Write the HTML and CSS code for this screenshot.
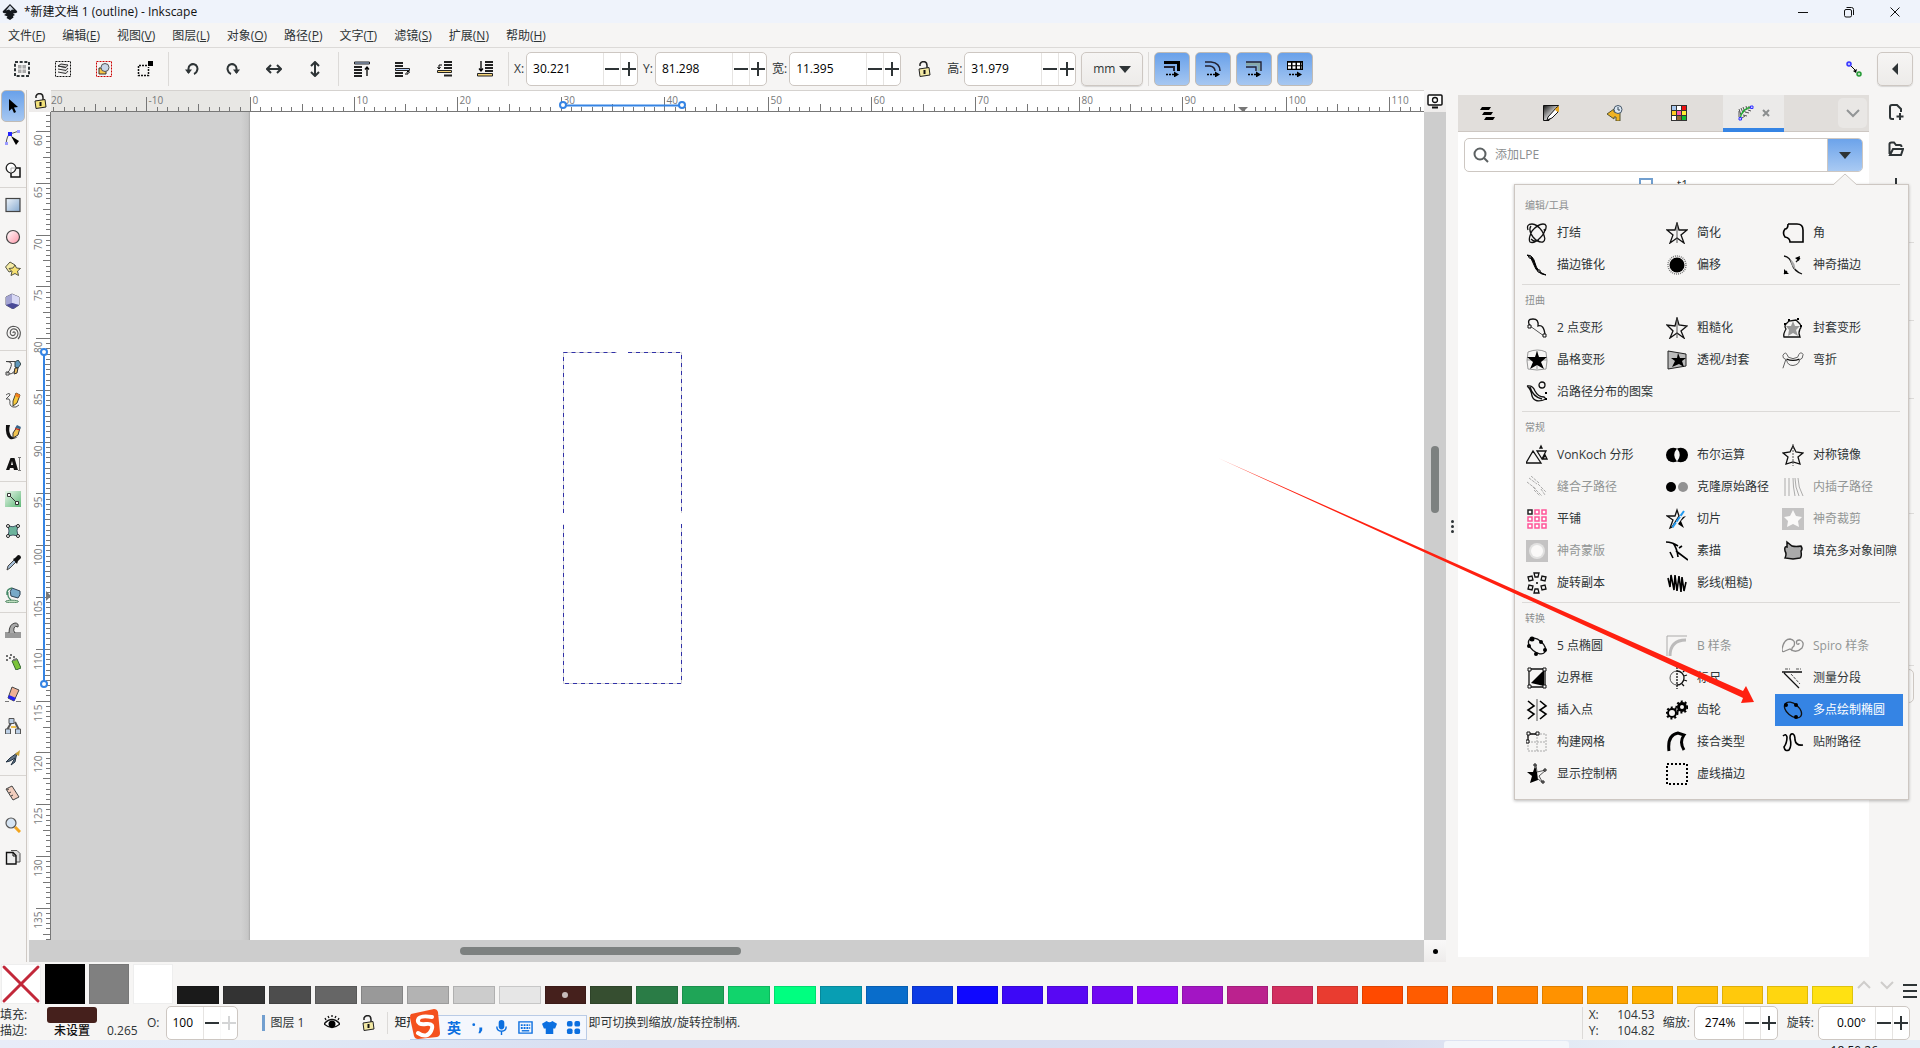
FILE: index.html
```html
<!DOCTYPE html>
<html lang="zh-CN">
<head>
<meta charset="utf-8">
<title>*新建文档 1 (outline) - Inkscape</title>
<link rel="stylesheet" href="styles.css">
</head>
<body>
<header class="titlebar">
  <svg class="i16" viewBox="0 0 16 16"><path d="M8 0 15 7q1 1.500-1 2l-3 .5 2 1.500-2 1 .5 1.500L8 16l-3.500-2 1-1.500L2 11l2.500-1.500L1.500 9Q0 8 1 7Z" fill="#15181d"/><path d="M8 1.500 12 6l-2-.5L8.500 7 7 5.500 4 6.500Z" fill="#cfd8e4"/></svg>
  <h1>*新建文档 1 (outline) - Inkscape</h1>
  <div class="winbtns">
    <button aria-label="最小化"><svg viewBox="0 0 12 12"><path d="M1 6.500h10"/></svg></button>
    <button aria-label="还原"><svg viewBox="0 0 12 12"><rect x="1.500" y="3.500" width="7" height="7.500" rx="1.500"/><path d="M3.500 1.500h5q2 0 2 2V9"/></svg></button>
    <button aria-label="关闭"><svg viewBox="0 0 12 12"><path d="m1.500 1.500 9 9m0-9-9 9"/></svg></button>
  </div>
</header>

<nav class="menubar">
  <button>文件(<u>F</u>)</button><button>编辑(<u>E</u>)</button><button>视图(<u>V</u>)</button><button>图层(<u>L</u>)</button><button>对象(<u>O</u>)</button><button>路径(<u>P</u>)</button><button>文字(<u>T</u>)</button><button>滤镜(<u>S</u>)</button><button>扩展(<u>N</u>)</button><button>帮助(<u>H</u>)</button>
</nav>

<div class="toolbar">
  <button class="tb" aria-label="全选"><svg class="i16" viewBox="0 0 16 16"><rect x="1" y="1" width="14" height="14" fill="none" stroke="#2e3436" stroke-width="2" stroke-dasharray="3 1.667"/><path d="M4 4h3.500v3.500H4zM8.500 4H12v3.500H8.500zM4 8.500h3.500V12H4zM8.500 8.500H12V12H8.500z" fill="#aaa"/></svg></button>
  <button class="tb" aria-label="选择所有图层"><svg class="i16" viewBox="0 0 16 16"><rect x=".5" y=".5" width="15" height="15" fill="none" stroke="#111" stroke-dasharray="2 1"/><path d="m3 5 3-2 7 1-2 2.500zM3 8l8 1.500L13 7M3 11l8 1.500 2-2.500M3 5l8 1.500" fill="#ddd" stroke="#333"/></svg></button>
  <button class="tb" aria-label="取消选择"><svg class="i16" viewBox="0 0 16 16"><rect x=".5" y=".5" width="15" height="15" fill="none" stroke="#c00" stroke-dasharray="2 1"/><path d="M3 7h7v6H3z" fill="#f6c545" stroke="#333"/><circle cx="9" cy="6.500" r="4" fill="#c8d6e8" stroke="#555"/></svg></button>
  <button class="tb" aria-label="切换选择框"><svg class="i16" viewBox="0 0 16 16"><path d="M10 4.500H1.500v10h10V6" fill="none" stroke="#111" stroke-width="1.500" stroke-dasharray="2 1"/><path d="M11 0h5v5h-5z"/></svg></button>
  <span class="sep"></span>
  <button class="tb" aria-label="逆时针旋转"><svg class="i16 ln" viewBox="0 0 16 16"><path d="M4.500 12V7.500a4.500 4.500 0 1 1 8.500 2.200Q12.500 12 10 13"/><path d="M1 8.500h7L4.500 13z" class="f"/></svg></button>
  <button class="tb" aria-label="顺时针旋转"><svg class="i16 ln" viewBox="0 0 16 16"><path d="M11.500 12V7.500A4.500 4.500 0 1 0 3 9.700Q3.500 12 6 13"/><path d="M15 8.500H8l3.500 4.500z" class="f"/></svg></button>
  <button class="tb" aria-label="水平翻转"><svg class="i16 ln" viewBox="0 0 16 16"><path d="M1 8h14M5 4 1 8l4 4m6-8 4 4-4 4"/></svg></button>
  <button class="tb" aria-label="垂直翻转"><svg class="i16 ln" viewBox="0 0 16 16"><path d="M8 1v14M4 5l4-4 4 4m-8 6 4 4 4-4"/></svg></button>
  <span class="sep"></span>
  <button class="tb" aria-label="置于顶层"><svg class="i16" viewBox="0 0 16 16"><path d="M.5 1h15v2H.5z" fill="#b7cff5" stroke="#222"/><path d="M0 6h8M0 9h8M0 12h8M0 15h8" stroke="#222" stroke-width="2"/><path d="M13 15V6m-2 2.500L13 6l2 2.500" fill="none" stroke="#000" stroke-width="1.300"/></svg></button>
  <button class="tb" aria-label="上移一层"><svg class="i16" viewBox="0 0 16 16"><path d="M0 2h8M0 5h8M0 12h8M0 15h8" stroke="#222" stroke-width="2"/><path d="M.5 7.500h14v2H.5z" fill="#b7cff5" stroke="#222"/><path d="M10 13h3v-3m-1.500 1.500L13 10l2 1.500" fill="none" stroke="#000"/></svg></button>
  <button class="tb" aria-label="下移一层"><svg class="i16" viewBox="0 0 16 16"><path d="M8 1h8M8 4h8M8 7h8M8 14.500h8" stroke="#222" stroke-width="2"/><path d="M1.500 9.500h14v2h-14z" fill="#f5d479" stroke="#222"/><path d="M6 4H3v4M1.500 6 3 8l1.500-2" fill="none" stroke="#000"/></svg></button>
  <button class="tb" aria-label="置于底层"><svg class="i16" viewBox="0 0 16 16"><path d="M8 1h8M8 4h8M8 7h8M8 10h8" stroke="#222" stroke-width="2"/><path d="M.5 12.500h15v2.500H.5z" fill="#f5d479" stroke="#222"/><path d="M4 0v10M2 7.500 4 10l2-2.500" fill="none" stroke="#000" stroke-width="1.300"/></svg></button>
  <span class="sep"></span>
  <label for="fx">X:</label><span class="spin"><input id="fx" value="30.221"><button class="minus" aria-label="减"></button><button class="plus" aria-label="加"></button></span>
  <label for="fy">Y:</label><span class="spin"><input id="fy" value="81.298"><button class="minus" aria-label="减"></button><button class="plus" aria-label="加"></button></span>
  <label for="fw">宽:</label><span class="spin"><input id="fw" value="11.395"><button class="minus" aria-label="减"></button><button class="plus" aria-label="加"></button></span>
  <button class="tb" aria-label="锁定宽高比"><svg class="i16" viewBox="0 0 16 16"><path d="M4 5V3Q5 .5 8 .5q3 .5 3 4v2.500" fill="none" stroke="#222" stroke-width="1.500"/><path d="m3 8 10-1.500 1 7.500L4 15.500z" fill="#f3e9a4" stroke="#222"/><path d="M8.500 9v4" stroke="#111" stroke-width="2"/></svg></button>
  <label for="fh">高:</label><span class="spin"><input id="fh" value="31.979"><button class="minus" aria-label="减"></button><button class="plus" aria-label="加"></button></span>
  <button class="unit">mm <i class="tri"></i></button>
  <span class="sep"></span>
  <button class="tb on" aria-label="缩放描边宽度"><svg class="i16" viewBox="0 0 16 16"><path d="M0 1.500h14.500V10" fill="none" stroke="#000" stroke-width="3"/><path d="M0 6h10v4" fill="none" stroke="#223" stroke-width="2"/><path d="M2 13.500h8" stroke="#000" stroke-width="1.500" stroke-dasharray="2 1"/><path d="m10 10.500 5 3-5 3z"/></svg></button>
  <button class="tb on" aria-label="缩放圆角"><svg class="i16" viewBox="0 0 16 16"><path d="M0 1h6q9 1 9 9M0 5h5q5 1 5 5" fill="none" stroke="#223" stroke-width="1.600"/><path d="M2 13.500h8" stroke="#000" stroke-width="1.500" stroke-dasharray="2 1"/><path d="m10 10.500 5 3-5 3z"/></svg></button>
  <button class="tb on" aria-label="变换渐变"><svg class="i16" viewBox="0 0 16 16"><path d="M0 3h13v7" fill="none" stroke="#8aa" stroke-width="3"/><path d="M0 1h15v9M0 6h10v4" fill="none" stroke="#223" stroke-width="1.400"/><path d="M2 13.500h8" stroke="#000" stroke-width="1.500" stroke-dasharray="2 1"/><path d="m10 10.500 5 3-5 3z"/></svg></button>
  <button class="tb on" aria-label="变换图案"><svg class="i16" viewBox="0 0 16 16"><path d="M0 0h16v9H0z"/><path d="M1 3h14M1 6.500h14" stroke="#fff" stroke-width="2.500" stroke-dasharray="3 1.500"/><path d="M2 13.500h8" stroke="#000" stroke-width="1.500" stroke-dasharray="2 1"/><path d="m10 10.500 5 3-5 3z"/></svg></button>
  <span class="grow"></span>
  <button class="tb" aria-label="贴齐"><svg class="i16" viewBox="0 0 16 16"><circle cx="3" cy="3" r="2" fill="#bbf" stroke="#33f" stroke-width="1.500"/><circle cx="13" cy="13" r="2" fill="#bdb" stroke="#293" stroke-width="1.500"/><path d="m5 5 4 4" stroke="#000"/><path d="m11 8-1 4-3-2z"/></svg></button>
  <button class="tb box" aria-label="折叠"><i class="ltri"></i></button>
</div>

<main class="work">
  <aside class="toolbox">
    <button class="on" aria-label="选择"><svg class="i16" viewBox="0 0 16 16"><path d="m4 1 9 8-4 .5 2 4.500-2 1-2-4.500L4 13z" fill="#000"/></svg></button>
    <button aria-label="节点"><svg class="i16" viewBox="0 0 16 16"><path d="M1 14Q2 5 5 4l9-3" fill="none" stroke="#555"/><path d="M3 2h4v4H3z" fill="#22f"/><path d="M0 12h3v3H0zM12 0h3v3h-3z" fill="#99f"/><path d="m6 6 8 5-3 4z"/></svg></button>
    <button aria-label="形状生成"><svg class="i16" viewBox="0 0 16 16"><circle cx="6" cy="6" r="4.800" fill="#fff" stroke="#222" stroke-width="1.300"/><path d="M11 6h4v9H6v-4" fill="none" stroke="#111" stroke-width="1.500"/><path d="M6 11V6h5" fill="none" stroke="#aaa"/></svg></button>
    <hr>
    <button aria-label="矩形"><svg class="i16" viewBox="0 0 16 16"><rect x="1" y="1.500" width="14" height="13" fill="url(#gb)" stroke="#444" stroke-width="1.200"/></svg></button>
    <button aria-label="圆形"><svg class="i16" viewBox="0 0 16 16"><circle cx="8" cy="8" r="6.500" fill="url(#gp)" stroke="#444" stroke-width="1.200"/></svg></button>
    <button aria-label="星形"><svg class="i16" viewBox="0 0 16 16"><path d="m5 1 5 3-.5 5L4 11 .5 6z" fill="#f5eba5" stroke="#554"/><path d="m10 4 1.500 3 4 .5-3 2.500 1 4.500-3.500-2-4 2 1-4L4 7.500l4-.5z" fill="#f8e272" stroke="#554"/></svg></button>
    <button aria-label="3D盒子"><svg class="i16" viewBox="0 0 16 16"><path d="m7 1 7 3v8l-6 4-7-4V4z" fill="#9a9bd0" stroke="#667"/><path d="M7 1v9l-6 2V4z" fill="#a4a4d2"/><path d="m7 1 7 3v8l-7-2z" fill="#d9d9f5"/><path d="m7 10 7 2-6 4-7-4z" fill="#4a4a98"/></svg></button>
    <button aria-label="螺旋"><svg class="i16" viewBox="0 0 16 16"><path d="M8 8q0-1.500 1.500-1Q11 8 9.500 10 7 11.500 5.500 9q-1-3.500 2-5Q12 3 13 8q0 5-5 5.500Q2 13 2 8q.5-6 6-6.800 6 0 7.300 5.800.3 5-2.300 7" fill="none" stroke="#555" stroke-width="1.100"/></svg></button>
    <hr>
    <button aria-label="钢笔"><svg class="i16" viewBox="0 0 16 16"><path d="M1 1.500q7 0 5 5-1 4-4 7M1 1.500h9M1 12h3v3H1zM4 14q5 0 6-5" fill="none" stroke="#444"/><path d="m10 2 3-2 3 4-3 4-3-1z" fill="#5f97bc" stroke="#344"/><path d="M10 8h3l-1 5-3 1z" fill="#eec060" stroke="#333"/></svg></button>
    <button aria-label="铅笔"><svg class="i16" viewBox="0 0 16 16"><path d="M1 3q4-3 4 0L1 7q4-1 4 2-1 5 3 6 3 1 6-2" fill="none" stroke="#555"/><path d="m11 1 4 2-3 8-4 3V9z" fill="#f8c93a" stroke="#443"/><path d="m11 1 4 2-1 3-4-2z" fill="#f3801f"/></svg></button>
    <button aria-label="书法"><svg class="i16" viewBox="0 0 16 16"><path d="M1 1h4q-2 6 1 11 4 3 8 0-4 4-9 3Q0 12 1 1" fill="#111"/><path d="m8 9 4-6 3 1-2 7-5 3z" fill="#f1c44f" stroke="#333"/><path d="m10 4 2-3 4 2-1 2z" fill="#39648a"/><path d="M10 4.500 15 6" stroke="#c22"/></svg></button>
    <button aria-label="文字"><svg class="i16" viewBox="0 0 16 16"><path fill-rule="evenodd" d="m1 14 4.500-12h4L13 14H9l-.6-2H5l-.6 2zM6 9h2L7 5z" fill="#111"/><path d="M14.500 2v12M13 1.500h3m-3 13h3" stroke="#777"/></svg></button>
    <hr>
    <button aria-label="渐变"><svg class="i16" viewBox="0 0 16 16"><path d="M0 0h16v16H0z" fill="url(#gg)"/><path d="m4 4 8 8" stroke="#333"/><path d="M2.500 2.500h3v3h-3zM10.500 10.500h3v3h-3z" fill="#fff" stroke="#333"/></svg></button>
    <button aria-label="网格"><svg class="i16" viewBox="0 0 16 16"><path d="M3 3q5 2 10-1-2 6 0 11-5-2-10 0 2-5 0-10" fill="#6cb39c" stroke="#456"/><g fill="#fff" stroke="#222"><circle cx="3" cy="3" r="1.500"/><circle cx="13" cy="3" r="1.500"/><circle cx="3" cy="13" r="1.500"/><circle cx="13" cy="13" r="1.500"/></g></svg></button>
    <button aria-label="取色"><svg class="i16" viewBox="0 0 16 16"><path d="m2 15 1-4 6-6 2 2-6 6z" fill="#a5bdd5" stroke="#444"/><path d="m8 4 2-1 3-3q3 0 3 3l-3 3-1 3z" fill="#111"/></svg></button>
    <button aria-label="油漆桶"><svg class="i16" viewBox="0 0 16 16"><ellipse cx="7" cy="14.500" rx="6.500" ry="1.300" fill="#bfe0c0" stroke="#586"/><path d="m7 1 8 3q1 4-2 7L6 9Q4 4 7 1" fill="#77a9c8" stroke="#345"/><path d="M7 1Q1 2 2 8M3 5q-1 5 3 8" fill="none" stroke="#486" stroke-width="1.300"/></svg></button>
    <hr>
    <button aria-label="微调"><svg class="i16" viewBox="0 0 16 16"><path d="M0 10h16v6H0z" fill="#999"/><path d="M4 11Q4 2 10 1q4 0 3 4-3-2-4 1t1 5" fill="#aaa" stroke="#444"/></svg></button>
    <button aria-label="喷绘"><svg class="i16" viewBox="0 0 16 16"><path d="m7 7 5-2 4 9-5 2z" fill="#7cc43a" stroke="#363"/><path d="m8 5 4-1v2L8 7z" fill="#777"/><path d="M1 2h2M4 4h2M1 6h2M5 1h2M8 3h2" stroke="#444" stroke-width="1.500"/></svg></button>
    <button aria-label="橡皮"><svg class="i16" viewBox="0 0 16 16"><path d="m7 1 7 3-5 11-6-3z" fill="#eeb195" stroke="#444"/><path d="m4 9 7 3-2 3-6-3z" fill="#22e"/><path d="M0 15.500h4m7 0h5" stroke="#777"/></svg></button>
    <button aria-label="连接器"><svg class="i16" viewBox="0 0 16 16"><path d="m6 5-4 7M10 4l4 8" stroke="#555" stroke-width="2"/><path d="M4 .5h5v5H4zM.5 11h5v5h-5zM10.500 11h5v5h-5z" fill="#bdd0e6" stroke="#555"/><path d="M6 8h5v2H6z" fill="#eec04d"/></svg></button>
    <button aria-label="LPE 工具"><svg class="i16" viewBox="0 0 16 16"><path d="m12 3-7 5-4 4 4-1 5-3-4 7 4-3 1-5z" fill="#678" stroke="#234"/><path d="m10 4 5-4-1 6z" fill="#c9a23a"/></svg></button>
    <hr>
    <button aria-label="测量"><svg class="i16" viewBox="0 0 16 16"><path d="m1 4 6-3 7 11-6 3z" fill="#f1cdbd" stroke="#444"/><path d="m2 5 2-1M4 8l2-1m0 4 2-1" stroke="#444"/></svg></button>
    <button aria-label="缩放"><svg class="i16" viewBox="0 0 16 16"><path d="m10 10 5 5" stroke="#f2a51f" stroke-width="3"/><circle cx="6" cy="6" r="5" fill="#d6e4f2" stroke="#555" stroke-width="1.200"/></svg></button>
    <button aria-label="页面"><svg class="i16" viewBox="0 0 16 16"><path d="M6 1.500h6l3 3V13h-4" fill="#ddd" stroke="#555"/><path d="M1.500 3.500H8l3 3V15H1.500z" fill="#eee" stroke="#111" stroke-width="1.400"/><path d="M8 4v3h3" fill="none" stroke="#111"/></svg></button>
  </aside>

  <section class="canvas">
    <button class="corner" aria-label="锁定参考线"><svg class="i16" viewBox="0 0 16 16"><path d="M4 5V3Q5 .5 8 .5q3 .5 3 4v2.500" fill="none" stroke="#222" stroke-width="1.500"/><path d="m3 8 10-1.500 1 7.500L4 15.500z" fill="#f3e27b" stroke="#222"/><path d="M8.500 9v4" stroke="#111" stroke-width="2"/></svg></button>
    <svg class="hruler" id="hruler"></svg>
    <button class="corner" aria-label="显示模式"><svg class="i16" viewBox="0 0 16 16"><rect x="1" y="2" width="14" height="10" rx="1" fill="#fff" stroke="#111" stroke-width="1.500"/><circle cx="8" cy="7" r="2.500" fill="none" stroke="#111" stroke-width="1.300"/><path d="M5 14.500h6" stroke="#111" stroke-width="2"/></svg></button>
    <svg class="vruler" id="vruler"></svg>
    <svg class="stage">
      <rect x="190" y="0" width="9" height="100%" fill="url(#edge)"/>
      <rect x="199" y="0" width="100%" height="100%" fill="#fff"/>
      <g fill="none"><path d="M512.500 240.500H566M577 240.500H630.500V401M630.500 412V571.500H512.500V412M512.500 401V240.500" stroke="#d2d2d2"/>
      <path d="M512.500 240.500H566M577 240.500H630.500V401M630.500 412V571.500H512.500V412M512.500 401V240.500" stroke="#3030a8" stroke-dasharray="4 4"/></g>
    </svg>
    <div class="vscroll"><i></i></div>
    <div class="hscroll"><i></i></div>
    <button class="corner" aria-label="画布菜单"><i class="dot"></i></button>
  </section>

  <div class="handle"><i></i><i></i><i></i></div>

  <section class="dock">
    <div class="tabs">
      <button aria-label="图层和对象"><svg class="i16" viewBox="0 0 16 16"><path d="M3 2h9l-2 3H1zM5 7h9l-2 3H3zM7 12h9l-2 3H5z"/></svg></button>
      <button aria-label="填充和描边"><svg class="i16" viewBox="0 0 16 16"><path d="M.5.500h15L6 15.500H.5z" fill="url(#gw)" stroke="#111"/><path d="m5 12 9-10 1 5-6 6-5 2z" fill="#fff" stroke="#111"/><path d="m12 4 4-3v6l-3-1z" fill="#e9a820"/></svg></button>
      <button aria-label="撤销历史"><svg class="i16" viewBox="0 0 16 16"><path d="m0 9 7-5v3h6v9H9v-4H7v2z" fill="#f0b323" stroke="#553"/><circle cx="11" cy="4.500" r="4" fill="#dce8f4" stroke="#456"/><path d="M11 2v3h2" fill="none" stroke="#345"/></svg></button>
      <button aria-label="色板"><svg class="i16" viewBox="0 0 16 16"><path d="M0 0h16v16H0z" fill="#333"/><path d="M1 1h4v4H1z" fill="#a9c8ee"/><path d="M6 1h4v4H6zM1 11h4v4H1z" fill="#fff"/><path d="M11 1h4v4h-4z" fill="#e11"/><path d="M1 6h4v4H1z" fill="#fc2"/><path d="M6 6h4v4H6z" fill="#f5a"/><path d="M11 6h4v4h-4z" fill="#fe3"/><path d="M6 11h4v4H6z" fill="#963"/><path d="M11 11h4v4h-4z" fill="#1b3"/></svg></button>
      <button class="cur" aria-label="路径效果"><svg class="i16" viewBox="0 0 16 16"><path d="M1 12V6m2 4L1 4m4 4L3 3m4 4L5 2m4 3L8 1m3 3V1M4 13l3-2M5 10l4 1M7 7l4 1M10 5l3 1" stroke="#555"/><path d="M2 14Q4 3 14 2" fill="none" stroke="#2a3" stroke-width="1.500"/><path d="M1 12.500h2.500V15H1zM12.500 1H15v2.500h-2.500z" fill="#ccf" stroke="#33f"/></svg><svg class="x" viewBox="0 0 8 8"><path d="m1 1 6 6m0-6L1 7"/></svg></button>
      <span class="grow"></span>
      <button class="more" aria-label="更多"><svg viewBox="0 0 14 14"><path d="m1 4 6 6 6-6"/></svg></button>
    </div>
    <div class="panel">
      <div class="search">
        <svg class="i16" viewBox="0 0 16 16"><circle cx="7" cy="7" r="5.500"/><path d="m11 11 4 4"/></svg>
        <input aria-label="添加LPE" placeholder="添加LPE">
        <button aria-label="选择效果"><i class="tri"></i></button>
      </div>
      <label class="peek"><input type="checkbox"> t1</label>
    </div>

    <div class="popover">
      <svg class="tip" viewBox="0 0 24 12"><path d="M0 12 12 1l12 11" /></svg>
      <section>
        <h2>编辑/工具</h2>
        <button><svg viewBox="0 0 22 22"><path d="M2 8Q0 2 6 2q5 0 10 7 5 9 1 11-5 1-10-5Q2 8 5 4M19 9q3-7-2-7-5 0-11 7-4 8-2 11 4 2 10-4 6-6 4-9M5 17q4 4 8 1" class="t"/></svg>打结</button>
        <button><svg viewBox="0 0 22 22"><path d="m11 1 2 7h8l-6 5 3 8-7-5-7 5 3-8-6-5h8z" class="t"/><path d="M11 2v19" class="g"/></svg>简化</button>
        <button><svg viewBox="0 0 22 22"><path d="M6 2h9q6 0 6 6v12H8q0-4-5-5-3-4 0-8 3 0 3-5" class="k"/></svg>角</button>
        <button><svg viewBox="0 0 22 22"><path d="M1 1q6 0 8 8 2 9 11 12-9-1-12-10Q6 4 1 1" class="b"/><path d="M3 2h2v2H3zM12 16h2v2h-2z" class="w"/></svg>描边锥化</button>
        <button><svg viewBox="0 0 22 22"><circle cx="11" cy="11" r="9" fill="none" stroke="#777" stroke-width="1.500" stroke-dasharray="1 1"/><circle cx="11" cy="11" r="7.500"/></svg>偏移</button>
        <button><svg viewBox="0 0 22 22"><path d="M2 2q6 1 8 8t10 10M5 17l-3 3m12-12 4-4" class="t"/><path d="M8 5q6 4 5 11-4-5-5-11" fill="#aaa"/><path d="m13 4 5-2-1 5zM2 15v5h5z"/></svg>神奇描边</button>
      </section>
      <hr>
      <section>
        <h2>扭曲</h2>
        <button><svg viewBox="0 0 22 22"><path d="M4 9Q0 2 7 2q6 0 5 7 6-2 7 9" class="t"/><path d="m4 9 14 10" class="g"/><path d="M2 8h3v3H2zM17 17h3v3h-3z" class="w"/></svg>2 点变形</button>
        <button><svg viewBox="0 0 22 22"><path d="m11 1 2 7 8 1-6 5 3 7-7-5-7 5 3-7-6-6 8 1z" class="t"/><path d="M11 2v19" class="g"/></svg>粗糙化</button>
        <button><svg viewBox="0 0 22 22"><path d="M4 7q-2 2 0 5-3 5-2 8h16q-2-4 0-8 2-2 0-5l-4-4-7 1z" class="t"/><path d="m11 4 2 5h5l-4 4 2 6-5-3-5 3 1-6-3-4h5z" fill="#999"/><path d="M6 2h2v2H6zM15 1h2v2h-2zM2 6h2v2H2zM18 8h2v2h-2z"/></svg>封套变形</button>
        <button><svg viewBox="0 0 22 22"><path d="M2 3q10-4 18 0 2 9 0 17-9 2-18 0Q0 12 2 3m9-1v18M1 11h20" fill="none" stroke="#999"/><path d="m11 2 2 6h8l-6 5 3 7-7-4-7 4 3-7-6-5h8z"/></svg>晶格变形</button>
        <button><svg viewBox="0 0 22 22"><path d="m2 2 18 3v12L2 20z" fill="#bbb" stroke="#222"/><path d="m12 4 2 5h6l-4 3 2 6-5-3-7 3 3-6-4-3h6z"/></svg>透视/封套</button>
        <button><svg viewBox="0 0 24 22"><path d="M1 6q3-6 6 2 5 3 10 0 3-8 6-3 0 5-4 6 0 5-7 6-6 0-7-6Q0 9 1 6M1 20l3-9" class="g"/><path d="M5 10q7 3 14 0" class="t"/></svg>弯折</button>
        <button class="wide"><svg viewBox="0 0 22 22"><path d="M1 5q6-1 8 5 3 6 9 6l2 2q-11 5-14-3Q5 8 1 5m3 1q3 10 12 12" class="t"/><circle cx="16" cy="4" r="3" class="t"/><path d="M19 11h2v2h-2zM19 17h2v2h-2z"/></svg>沿路径分布的图案</button>
      </section>
      <hr>
      <section>
        <h2>常规</h2>
        <button><svg viewBox="0 0 22 22"><path d="m0 19 7-12 8 12zM11 7h9l-4 8zM14 4l1-2 1 2zM17 15l2-4 2 4z" class="t"/></svg>VonKoch 分形</button>
        <button><svg viewBox="0 0 24 22"><circle cx="8" cy="11" r="8"/><circle cx="16" cy="11" r="8"/><path d="M12 4q6 7 0 14-6-7 0-14" fill="#f6f5f4"/></svg>布尔运算</button>
        <button><svg viewBox="0 0 22 22"><path d="m11 2 3 6 7 1-5 4 2 7-7-2-7 2 2-7-5-4 7-1z" class="t"/><path d="M11 0v22" class="g" stroke-dasharray="2 1"/></svg>对称镜像</button>
        <button disabled><svg viewBox="0 0 22 22"><path d="m3 2 8 6m-10-2 9 7M5 0l8 7m-6 4 9 9m-8-6 6 6M12 8l8 8m-5-3 4 6" class="g" stroke-dasharray="3 1"/></svg>缝合子路径</button>
        <button><svg viewBox="0 0 22 22"><circle cx="5" cy="11" r="5"/><circle cx="17" cy="11" r="5" fill="#929292"/></svg>克隆原始路径</button>
        <button disabled><svg viewBox="0 0 22 22"><path d="M3 2v18M7 2v18M11 2q0 9 2 18M13 2q0 9 4 18M16 2q0 9 5 18" class="g"/></svg>内插子路径</button>
        <button><svg viewBox="0 0 22 22"><path d="M9 2h4v4H9zM16 2h4v4h-4zM2 9h4v4H2zM9 9h4v4H9zM16 9h4v4h-4zM2 16h4v4H2zM9 16h4v4H9zM16 16h4v4h-4z" fill="#fff" stroke="#f59" stroke-width="1.500"/><path d="M2 2h4v4H2z" fill="#fff" stroke="#222" stroke-width="1.500"/></svg>平铺</button>
        <button><svg viewBox="0 0 22 22"><path d="m11 2 2 6-7 11-2 1 3-8-6-4h8z" class="t"/><path d="m20 8-5 5 3 7-6-4 5-7z" /><path d="M18 3 6 20" stroke="#29e" stroke-width="2" stroke-dasharray="6 1"/></svg>切片</button>
        <button disabled><svg viewBox="0 0 22 22"><path d="M0 0h22v22H0z" fill="#888"/><path d="m11 2 3 6 6 1-4 4 1 6-6-3-6 3 1-6-4-4 6-1z" fill="#fff"/></svg>神奇裁剪</button>
        <button disabled><svg viewBox="0 0 22 22"><path d="M0 0h22v22H0z" fill="#888"/><circle cx="11" cy="11" r="8" fill="#ccc"/><circle cx="11" cy="11" r="6" fill="#fff"/></svg>神奇蒙版</button>
        <button><svg viewBox="0 0 22 22"><path d="M0 2q6 0 12 4M7 3q4 5 5 14M10 11l12 9M4 12l3 6M13 8l3-2" class="k"/></svg>素描</button>
        <button><svg viewBox="0 0 22 22"><path d="m5 2 5 4q4 1 9 0 2 3 0 5 1 6-1 7l-7 1-8-1q2-4 0-7-1-5 2-4z" fill="#aaa" stroke="#111" stroke-width="1.500"/></svg>填充多对象间隙</button>
        <button><svg viewBox="0 0 22 22"><path d="M8 1h5l-1 4H9zM8 21h5l-1-4H9zM2 5l4-1 1 4-4 1zM20 5l-4-1-1 4 4 1zM2 17l4 1 1-4-4-1zM20 17l-4 1-1-4 4-1z" class="t"/><circle cx="11" cy="11" r="1"/></svg>旋转副本</button>
        <button><svg viewBox="0 0 22 22"><path d="m2 6 2 9 1-12 3 15 1-15 2 16 2-15 2 16 1-15 2 14 2-9" class="k"/></svg>影线(粗糙)</button>
      </section>
      <hr>
      <section>
        <h2>转换</h2>
        <button><svg viewBox="0 0 22 22"><ellipse cx="11" cy="11" rx="10" ry="6" transform="rotate(40 11 11)" class="t"/><circle cx="6" cy="4" r="2.500"/><circle cx="3" cy="11" r="2"/><circle cx="10" cy="19" r="2"/><circle cx="19" cy="15" r="2"/><circle cx="15" cy="7" r="2"/></svg>5 点椭圆</button>
        <button disabled><svg viewBox="0 0 22 22"><path d="M1 21V1h20" class="g"/><path d="M4 21Q4 5 20 5" fill="none" stroke="#777" stroke-width="3"/></svg>B 样条</button>
        <button disabled><svg viewBox="0 0 22 22"><path d="M10 16q-1-3 2-5 2-6-4-7-6 0-8 10 0 4 3 2l5-2q6 5 12-1 3-6-2-8-5 0-3 4 2 1 2-1" class="t"/></svg>Spiro 样条</button>
        <button><svg viewBox="0 0 22 22"><path d="M3 2h16v18H3z" class="t"/><path d="M18 3v16L5 16z"/><path d="M2 1h3v3H2zM17 1h3v3h-3zM2 18h3v3H2zM17 18h3v3h-3z" class="w"/></svg>边界框</button>
        <button><svg viewBox="0 0 22 22"><path d="M11 4a7 7 0 0 0 0 14" class="g"/><path d="M11 4a7 7 0 0 1 0 14M17 5l2-2M18 9l3-1M18 13l3 1M16 17l2 2" class="t"/><path d="M11 0v22" class="t" stroke-dasharray="2 1"/></svg>标尺</button>
        <button><svg viewBox="0 0 22 22"><path d="M0 5h20M2 6l15 15" class="t"/><path d="M3 2h5m6 0h5M9 7l9 10" class="g" stroke-dasharray="3 1"/></svg>测量分段</button>
        <button><svg viewBox="0 0 22 22"><path d="m2 2 6 5-6 4 6 4-6 5M14 2l6 5-6 4 6 4-6 5" class="k"/><path d="M11 0v22" class="g"/></svg>插入点</button>
        <button><svg viewBox="0 0 22 22"><circle cx="6" cy="14" r="4" fill="none" stroke="#000" stroke-width="2"/><circle cx="6" cy="14" r="5.500" fill="none" stroke="#000" stroke-width="2" stroke-dasharray="2 2"/><circle cx="16" cy="8" r="3.500" fill="none" stroke="#000" stroke-width="3"/><circle cx="16" cy="8" r="5.500" fill="none" stroke="#000" stroke-width="2" stroke-dasharray="2 2"/></svg>齿轮</button>
        <button class="hot"><svg viewBox="0 0 22 22"><ellipse cx="11" cy="11" rx="10" ry="6" transform="rotate(40 11 11)" class="t"/><circle cx="4" cy="6" r="2"/><circle cx="14" cy="6" r="2"/><circle cx="14" cy="18" r="2"/></svg>多点绘制椭圆</button>
        <button><svg viewBox="0 0 22 22"><path d="M2 3h18v17H2zM11 3v17M2 11h18" fill="none" stroke="#aaa" stroke-dasharray="2 1"/><path d="M2 10V3h9" class="t"/><path d="M1 1h3v3H1zM10 1h3v3h-3zM0 9h3v3H0z" class="w"/></svg>构建网格</button>
        <button><svg viewBox="0 0 22 22"><path d="M3 20Q1 4 12 2l6 2q-5 7 0 15" fill="none" stroke="#000" stroke-width="3"/></svg>接合类型</button>
        <button><svg viewBox="0 0 22 22"><path d="M1 5q3-3 4 1 0 6-3 10 1 5 5 3 3-4 1-12 0-5 3-4 2 1 2 6 1 6 8 5" class="k"/></svg>贴附路径</button>
        <button><svg viewBox="0 0 22 22"><path d="m9 3 2 6 1 8-8 3 2-7-5-4h6z"/><path d="m10 2 1 7 9-2-7 6 4 7-5-4" class="g"/><path d="M8 1h2v2H8zM18 6h2v2h-2zM16 18h2v2h-2z" class="w"/></svg>显示控制柄</button>
        <button><svg viewBox="0 0 22 22"><path d="M1 1h20v20H1z" fill="none" stroke="#000" stroke-width="2" stroke-dasharray="2 2"/></svg>虚线描边</button>
      </section>
    </div>
  </section>

  <aside class="commands">
    <button aria-label="新建"><svg class="i16" viewBox="0 0 16 16"><path d="M6 15H4q-2 0-2-2V3q0-2 2-2h5l4 4v3M12 9v7m-3.500-3.500h7"/></svg></button>
    <button aria-label="打开"><svg class="i16" viewBox="0 0 16 16"><path d="M1.500 13V3q0-1.500 2-1.500H6L8 4h4q1.500 0 1.500 2M2 14l3-6h10l-2 6z"/></svg></button>
    <button aria-label="保存"><svg class="i16" viewBox="0 0 16 16"><path d="M8 0v10M4 7l4 4 4-4M2 15h12"/></svg></button>
    <div class="ticks"><hr><hr><hr><hr><hr><i></i></div>
  </aside>
</main>

<div class="palette">
  <button class="big none" aria-label="无"><svg viewBox="0 0 40 40"><path d="m3 3 34 34m0-34L3 37"/></svg></button>
  <button class="big" style="background:#000" aria-label="黑"></button>
  <button class="big" style="background:#808080" aria-label="灰"></button>
  <button class="big" style="background:#fff" aria-label="白"></button>
  <div class="swatches" id="swatches"></div>
  <div class="pnav">
    <svg viewBox="0 0 14 14"><path d="m1 10 6-6 6 6"/></svg>
    <svg viewBox="0 0 14 14"><path d="m1 4 6 6 6-6"/></svg>
    <button aria-label="色板菜单"></button>
  </div>
</div>

<footer class="status">
  <div class="style"><span>填充:</span><i></i><span>描边:</span><b>未设置</b><span>0.265</span></div>
  <label for="op">O:</label><span class="spin op"><input id="op" value="100"><button class="minus" aria-label="减"></button><button class="plus off" aria-label="加"></button></span>
  <button class="layer">图层 1</button>
  <button class="ic" aria-label="可见"><svg class="i16" viewBox="0 0 16 16"><path d="M0 9q8-9 16 0-8 7-16 0M2 5 1 3m4 0L4 1m4 1V0m3 3 1-2m2 4 1-2" fill="#fff" stroke="#111" stroke-width="1.300"/><circle cx="8" cy="9" r="3.500"/></svg></button>
  <button class="ic" aria-label="锁定"><svg class="i16" viewBox="0 0 16 16"><path d="M4 5V3Q5 .5 8 .5q3 .5 3 4v2.500" fill="none" stroke="#222" stroke-width="1.500"/><path d="m3 8 10-1.500 1 7.500L4 15.500z" fill="#f3e9a4" stroke="#222"/><path d="M8.500 9v4" stroke="#111" stroke-width="2"/></svg></button>
  <p class="msg"><b>矩形</b><span>即可切换到缩放/旋转控制柄.</span></p>
  <div class="xy"><span>X:</span><span>104.53</span><span>Y:</span><span>104.82</span></div>
  <label for="zm">缩放:</label><span class="spin zm"><input id="zm" value="274%"><button class="minus" aria-label="减"></button><button class="plus" aria-label="加"></button></span>
  <label for="ro">旋转:</label><span class="spin ro"><input id="ro" value="0.00°"><button class="minus" aria-label="减"></button><button class="plus" aria-label="加"></button></span>
</footer>
<div class="taskbar"><i></i><span>18:50:26</span></div>

<div class="ime">
  <svg class="logo" viewBox="0 0 30 30"><path d="m1 5 23-5q3 0 4 3l2 21q0 3-3 4L8 30q-3 0-4-3L0 9q0-3 1-4" fill="#f4511e"/><path d="M22 8Q9 6 8 11t8 4 5 7-13 2" fill="none" stroke="#fff" stroke-width="4" stroke-linecap="round"/></svg>
  <b>英</b>
  <svg viewBox="0 0 16 16"><circle cx="4" cy="5" r="1.500"/><path d="M10 8h3v3l-2 3H9l1-3z"/></svg>
  <svg viewBox="0 0 16 16"><rect x="5" y="0" width="6" height="10" rx="3"/><path d="M3 7q0 5 5 5t5-5M8 12v4" fill="none" stroke="#0b6fe0" stroke-width="1.500"/></svg>
  <svg viewBox="0 0 16 16"><path d="M1 2h14v12H1z" fill="none" stroke="#0b6fe0" stroke-width="1.500"/><path d="M3 5.500h10M3 8.500h10" stroke="#0b6fe0" stroke-width="2" stroke-dasharray="2 1"/><path d="M4 11.500h8" stroke="#0b6fe0" stroke-width="1.500"/></svg>
  <svg viewBox="0 0 16 16"><path d="M5 1q3 3 6 0l5 3-2 5h-2v6H4V9H2L0 4z"/></svg>
  <svg viewBox="0 0 16 16"><rect x="1" y="1" width="6" height="6" rx="2"/><rect x="9" y="1" width="6" height="6" rx="2"/><rect x="1" y="9" width="6" height="6" rx="2"/><rect x="9" y="9" width="6" height="6" rx="2"/></svg>
</div>

<svg class="arrow" viewBox="0 0 540 250"><path d="M3 3 528 236l3-5 8 16-13 1 2-5-2-1z" fill="url(#ga)"/></svg>

<svg class="defs">
  <linearGradient id="edge"><stop offset="0" stop-color="#d1d1d1"/><stop offset=".8" stop-color="#c6c6c6"/><stop offset="1" stop-color="#a8a8a8"/></linearGradient>
  <linearGradient id="gb" x2="1" y2="1"><stop stop-color="#eef4fa"/><stop offset="1" stop-color="#85a9cf"/></linearGradient>
  <linearGradient id="gp" x2="1" y2="1"><stop stop-color="#fff"/><stop offset="1" stop-color="#ff96a8"/></linearGradient>
  <linearGradient id="gg" x2="1" y2="1"><stop stop-color="#e8f6ea"/><stop offset="1" stop-color="#5fb878"/></linearGradient>
  <linearGradient id="gw" x2="1" y2="1"><stop stop-color="#111"/><stop offset=".7" stop-color="#fff"/></linearGradient>
  <linearGradient id="ga"><stop stop-color="#ff2010" stop-opacity=".7"/><stop offset=".08" stop-color="#ff2010"/><stop offset="1" stop-color="#ff2010"/></linearGradient>
</svg>
<script src="main.js"></script>
</body>
</html>
```
FILE: styles.css
```css
* { box-sizing: border-box; }
body {
  margin: 0; min-height: 100vh; display: flex; flex-direction: column; position: relative;
  background: #f6f5f4; color: #2e3436; overflow: hidden;
  font: 12px/16px "Open Sans", "Noto Sans CJK SC", sans-serif;
}
button { font: inherit; color: inherit; border: 0; background: none; padding: 0; display: flex; align-items: center; justify-content: center; flex: none; }
input { font: inherit; color: #000; border: 0; background: none; padding: 0; min-width: 0; outline: 0; }
svg { display: block; flex: none; }
hr { border: 0; margin: 0; }
label { flex: none; }
.i16 { width: 16px; height: 16px; }
.grow { flex: 1; }
.defs { position: absolute; width: 0; height: 0; }

.titlebar { height: 23px; display: flex; align-items: center; padding: 0 2px; gap: 6px; background: #eff3fb; color: #111; }
.titlebar h1 { font-size: 12px; font-weight: 400; margin: 0; flex: 1; }
.winbtns { display: flex; }
.winbtns button { width: 46px; height: 22px; }
.winbtns svg { width: 12px; height: 12px; fill: none; stroke: #111; }

.menubar { height: 25px; display: flex; gap: 17px; padding: 1px 0 0 8px; align-items: center; border-bottom: 1px solid #dcdad8; }

.toolbar { height: 42px; display: flex; align-items: center; gap: 5px; padding: 0 7px 0 4px; }
.toolbar label { margin-right: -3px; }
.tb { width: 36px; height: 34px; border-radius: 5px; }
.tb.on, .toolbox .on { background: linear-gradient(#69a1ea, #a6c7f1); border: 1px solid #c0bbb5; }
.tb.box, .unit { border: 1px solid #cdc7c2; background: linear-gradient(#f6f5f4, #edebe9); border-radius: 5px; box-shadow: 0 1px 1px #0002; }
.unit { width: 62px; height: 34px; gap: 4px; }
.sep { width: 1px; height: 34px; background: #dcdad8; }
.ln { fill: none; stroke: #2e3436; stroke-width: 2; }
.ln .f { fill: #2e3436; stroke: none; }
.tri { border: 6px solid transparent; border-top: 7px solid #2e3436; border-bottom: 0; }
.ltri { border: 6px solid transparent; border-right: 6px solid #2e3436; border-left: 0; }

.spin { display: flex; width: 112px; height: 34px; border: 1px solid #cdc7c2; border-radius: 5px; background: #fff; flex: none; }
.spin input { flex: 1; width: 0; padding-left: 6px; }
.spin button { width: 17px; border-left: 1px solid #e6e4e2; background: linear-gradient(#2e3436, #2e3436) center / 14px 2px no-repeat; }
.spin .plus { background: linear-gradient(#2e3436, #2e3436) center / 14px 2px no-repeat, linear-gradient(#2e3436, #2e3436) center / 2px 14px no-repeat; }
.spin .off { opacity: .2; }

.work { flex: 1; display: flex; }
.toolbox { width: 27px; border-right: 1px solid #cfc9c4; flex: none; }
.toolbox button { width: 24px; height: 32px; margin-left: 1px; border-radius: 5px; }
.toolbox hr { height: 1px; background: #d8d5d2; margin: 1px 0; }

.canvas { flex: 1; display: grid; grid-template: 22px 1fr 22px / 22px 1fr 22px; margin-left: 2px; min-width: 0; }
.hruler, .vruler, .stage { width: 100%; height: 100%; overflow: hidden; }
.hruler { background: #fff; border-top: 1px solid #d5d2cf; }
.vruler { background: #fff; }
.ruler-text { font-size: 10px; fill: #77797a; }
.stage { background: #d1d1d1; }
.corner { width: 22px; height: 22px; background: linear-gradient(#f9f8f8, #eeeceb); }
.vscroll, .hscroll { background: #cdcdcd; display: flex; justify-content: center; }
.vscroll i { width: 8px; height: 67px; margin-top: 334px; border-radius: 4px; background: #7d8180; }
.hscroll { grid-column: 1 / 3; justify-content: flex-start; align-items: center; }
.hscroll i { width: 281px; height: 8px; margin-left: 431px; border-radius: 4px; background: #7d8180; }
.dot { width: 5px; height: 5px; border-radius: 50%; background: #000; }
.handle { width: 12px; flex: none; display: flex; flex-direction: column; align-items: center; justify-content: center; gap: 2px; }
.handle i { width: 3px; height: 3px; border-radius: 50%; background: #2e3436; }

.dock { width: 411px; flex: none; margin: 5px 0; display: flex; flex-direction: column; position: relative; }
.tabs { height: 37px; display: flex; background: #e1dedb; border-bottom: 1px solid #cdc7c2; padding-right: 2px; align-items: center; }
.tabs > button { width: 64px; height: 37px; padding-right: 6px; }
.tabs > .cur { width: 61px; gap: 8px; margin-left: 9px; background: #ebeae9; border-bottom: 4px solid #3584e4; padding: 4px 0 0; }
.tabs .x { width: 8px; height: 8px; fill: none; stroke: #8b8e8f; stroke-width: 2; }
.tabs > .more { width: 29px; height: 30px; padding: 0; border-radius: 5px; background: #e9e7e5; }
.more svg { width: 14px; height: 14px; fill: none; stroke: #929596; stroke-width: 2; }
.panel { flex: 1; background: #fff; padding: 6px; }
.search { display: flex; align-items: center; height: 34px; border: 1px solid #cdc7c2; border-radius: 5px; overflow: hidden; padding-left: 8px; gap: 6px; }
.search svg { fill: none; stroke: #5c6162; stroke-width: 2; }
.search input { flex: 1; }
.search input::placeholder { color: #8b8e8f; }
.search button { width: 35px; height: 34px; background: linear-gradient(#6aa2ea, #abcbf3); border-left: 1px solid #cdc7c2; }
.peek { display: flex; align-items: center; gap: 24px; margin: 5px 0 0 175px; }
.peek input { appearance: none; width: 14px; height: 14px; border: 2px solid #729fcf; margin: 0; }

.popover { position: absolute; z-index: 2; left: 56px; top: 89px; width: 395px; padding: 5px 5px 6px 4px; background: #f6f5f4; border: 1px solid #cdc7c2; box-shadow: 0 1px 3px #0004; }
.tip { position: absolute; left: 318px; top: -12px; width: 24px; height: 12px; fill: #f6f5f4; stroke: #cdc7c2; }
.popover section { display: grid; grid-template-columns: 140px 116px 1fr; padding-bottom: 3px; }
.popover h2 { grid-column: 1 / 4; height: 27px; margin: 0; padding: 7px 6px 0; font-size: 10px; font-weight: 400; color: #8b8e8f; }
.popover hr { height: 1px; background: #dcdad8; margin: 0 3px; }
.popover button { height: 32px; justify-content: flex-start; gap: 9px; padding-left: 7px; white-space: nowrap; }
.popover .wide { grid-column: 1 / 4; }
.popover button svg { width: 22px; height: 22px; }
.popover button:disabled { color: #929595; }
.popover button:disabled svg { opacity: .45; }
.popover .hot { background: #3584e4; color: #fff; }
.k { fill: none; stroke: #000; stroke-width: 1.6; }
.t { fill: none; stroke: #111; stroke-width: 1.3; }
.g { fill: none; stroke: #555; }
.w { fill: #fff; stroke: #111; }
.b { fill: #000; stroke: #000; }

.commands { width: 51px; flex: none; display: flex; flex-direction: column; align-items: center; padding: 3px 0 0 3px; }
.commands button { height: 37px; }
.commands svg { fill: none; stroke: #2e3436; stroke-width: 2; }
.ticks { align-self: stretch; margin-right: 6px; padding-top: 38px; display: flex; flex-direction: column; gap: 77px; }
.ticks hr { height: 1px; background: #dcdad8; }
.ticks hr:nth-child(4) { margin-top: 37px; }
.ticks hr:nth-child(5) { margin-top: 74px; }
.ticks i { height: 34px; margin-top: -74px; border: 1px solid #cdc7c2; border-radius: 5px; }

.palette { height: 42px; display: flex; gap: 4px; align-items: flex-end; padding: 0 4px 0 1px; }
.big { width: 40px; height: 40px; border: 1px solid #0001; }
.none { background: #fff; }
.none svg { width: 40px; height: 40px; fill: none; stroke: #c2283a; stroke-width: 3; stroke-linecap: round; }
.swatches { flex: 1; display: flex; gap: 4px; }
.swatches button { height: 18px; flex: 41 1 0; border: 1px solid #0002; }
.swatches button:nth-child(-n+16) { flex-grow: 42; }
.swatches .used::after { content: ""; width: 6px; height: 6px; border-radius: 50%; background: #c7bcba; }
.pnav { display: flex; gap: 9px; width: 59px; height: 40px; padding-top: 14px; }
.pnav svg { width: 14px; height: 14px; fill: none; stroke: #cfcdcb; stroke-width: 2; }
.pnav button { width: 14px; height: 14px; margin-top: 6px; background: repeating-linear-gradient(#2e3436 0 2px, transparent 2px 6px); }

.status { height: 36px; display: flex; align-items: center; white-space: nowrap; padding: 2px 10px 0 0; }
.style { width: 147px; display: grid; grid-template: 16px 16px / 47px 50px 1fr; align-items: center; flex: none; }
.style i { height: 16px; border-radius: 3px; background: #45201c; }
.style span:nth-child(3) { grid-column: 1; }
.style b { text-align: center; font-weight: 500; color: #111; }
.style span:last-child { padding-left: 10px; }
.op { width: 72px; margin-left: 6px; }
.layer { margin-left: 24px; padding-left: 6px; border-left: 3px solid #729fcf; }
.ic { width: 36px; }
.layer + .ic { margin-left: 10px; }
.msg { flex: 1; margin: 0 0 0 1px; border-left: 1px solid #dcdad8; padding: 3px 0 3px 6px; display: flex; gap: 170px; }
.msg b { font-weight: 500; }
.xy { display: grid; grid-template-columns: 25px 41px; padding-left: 6px; border-left: 1px solid #dcdad8; margin-right: 8px; }
.xy span:nth-child(even) { text-align: right; }
.zm { width: 84px; margin: 0 9px 0 4px; }
.zm input { padding-left: 10px; }
.ro { width: 92px; margin-left: 4px; }
.ro input { padding-left: 18px; }
.taskbar { height: 8px; overflow: hidden; background: linear-gradient(90deg, #e8ecf8, #e2ebf7 12%, #d7def1 33%, #d9def0 72%, #e6eef6 85%, #e6eef6); display: flex; justify-content: flex-end; padding-right: 42px; color: #111; }
.taskbar span { padding-top: 3px; }
.taskbar i { width: 125px; margin: 1px 262px 0 0; background: #f3f6fa; border-radius: 3px 3px 0 0; }

.ime { position: absolute; left: 410px; bottom: 8px; width: 177px; height: 25px; display: flex; align-items: center; justify-content: space-between; padding: 0 5px 0 37px; background: #f4f7fd; border: 1px solid #b9cbe6; border-left: 0; color: #0b6fe0; }
.ime svg { width: 15px; height: 15px; fill: #0b6fe0; }
.ime .logo { position: absolute; left: 0; bottom: 0; width: 30px; height: 30px; }
.ime b { font-size: 14px; }
.arrow { position: absolute; z-index: 3; right: 165px; top: 455px; width: 540px; height: 250px; pointer-events: none; }
```
FILE: main.js
```js
const NS = 'http://www.w3.org/2000/svg';
const MM = 10.357; // pixels per millimetre at the current zoom

function add(parent, tag, attrs, text) {
  const el = document.createElementNS(NS, tag);
  for (const k in attrs) el.setAttribute(k, attrs[k]);
  if (text !== undefined) el.textContent = text;
  parent.appendChild(el);
  return el;
}

// Horizontal ruler: 1 mm steps, labels each 10 mm
const h = document.getElementById('hruler');
const width = h.getBoundingClientRect().width;
add(h, 'rect', { x: 0, y: 0, width: 199, height: 22, fill: '#e8e7e4' });
add(h, 'text', { x: 0, y: 13, class: 'ruler-text' }, '20');
let d = '';
for (let v = -19; 199 + v * MM < width; v++) {
  const x = Math.round(199 + v * MM) + 0.5;
  d += `M${x} 20v${v % 10 === 0 ? -14 : v % 5 === 0 ? -7 : -4}`;
  if (v % 10 === 0 && x + 24 < width) add(h, 'text', { x: x + 2, y: 13, class: 'ruler-text' }, v);
}
add(h, 'path', { d: d + `M0 20.500H${width}`, stroke: '#777', fill: 'none' });
add(h, 'path', { d: 'M1187 16h10l-5 5z', fill: '#777' });
add(h, 'path', { d: 'M512 14.500H631', stroke: '#3584e4', 'stroke-width': 2 });
for (const cx of [512, 631]) add(h, 'circle', { cx, cy: 14, r: 3, fill: '#fff', stroke: '#3584e4', 'stroke-width': 2 });

// Vertical ruler: 0.5 mm steps, labels each 5 mm
const w = document.getElementById('vruler');
const height = w.getBoundingClientRect().height;
d = '';
for (let i = 117; 19 + (i / 2 - 60) * MM < height; i++) {
  const v = i / 2;
  const y = Math.round(19 + (v - 60) * MM) + 0.5;
  d += `M21 ${y}h${i % 10 === 0 ? -14 : i % 5 === 0 ? -7 : -4}`;
  if (i % 10 === 0 && y + 24 < height) {
    add(w, 'text', { class: 'ruler-text', 'text-anchor': 'end', transform: `translate(13 ${y + 3}) rotate(-90)` }, v);
  }
}
add(w, 'path', { d: d + `M21.500 0V${height}`, stroke: '#777', fill: 'none' });
add(w, 'path', { d: 'M17 479v10l5-5z', fill: '#777' });
add(w, 'path', { d: 'M15 240V572', stroke: '#3584e4', 'stroke-width': 2 });
for (const cy of [240, 572]) add(w, 'circle', { cx: 15, cy, r: 3, fill: '#fff', stroke: '#3584e4', 'stroke-width': 2 });

// Palette
const colors = ('1a1a1a 333333 4d4d4d 666666 999999 b3b3b3 cccccc e6e6e6 45201c 364e30 2a7c46 1fa557 11d46c 00ff80 089eb3 096dcb ' +
  '0c3ae4 0f08ff 3d08f7 5808f3 7008f2 8c08f3 a315c4 bb228e d22f5f e93c30 ff4a00 ff5c00 ff6e00 ff8000 ff9200 ffa300 ffb000 ffbe06 ffc90c ffd60f ffe112').split(' ');
const box = document.getElementById('swatches');
for (const c of colors) {
  const b = document.createElement('button');
  b.style.background = '#' + c;
  b.setAttribute('aria-label', '#' + c);
  if (c === '45201c') b.className = 'used';
  box.appendChild(b);
}
```
